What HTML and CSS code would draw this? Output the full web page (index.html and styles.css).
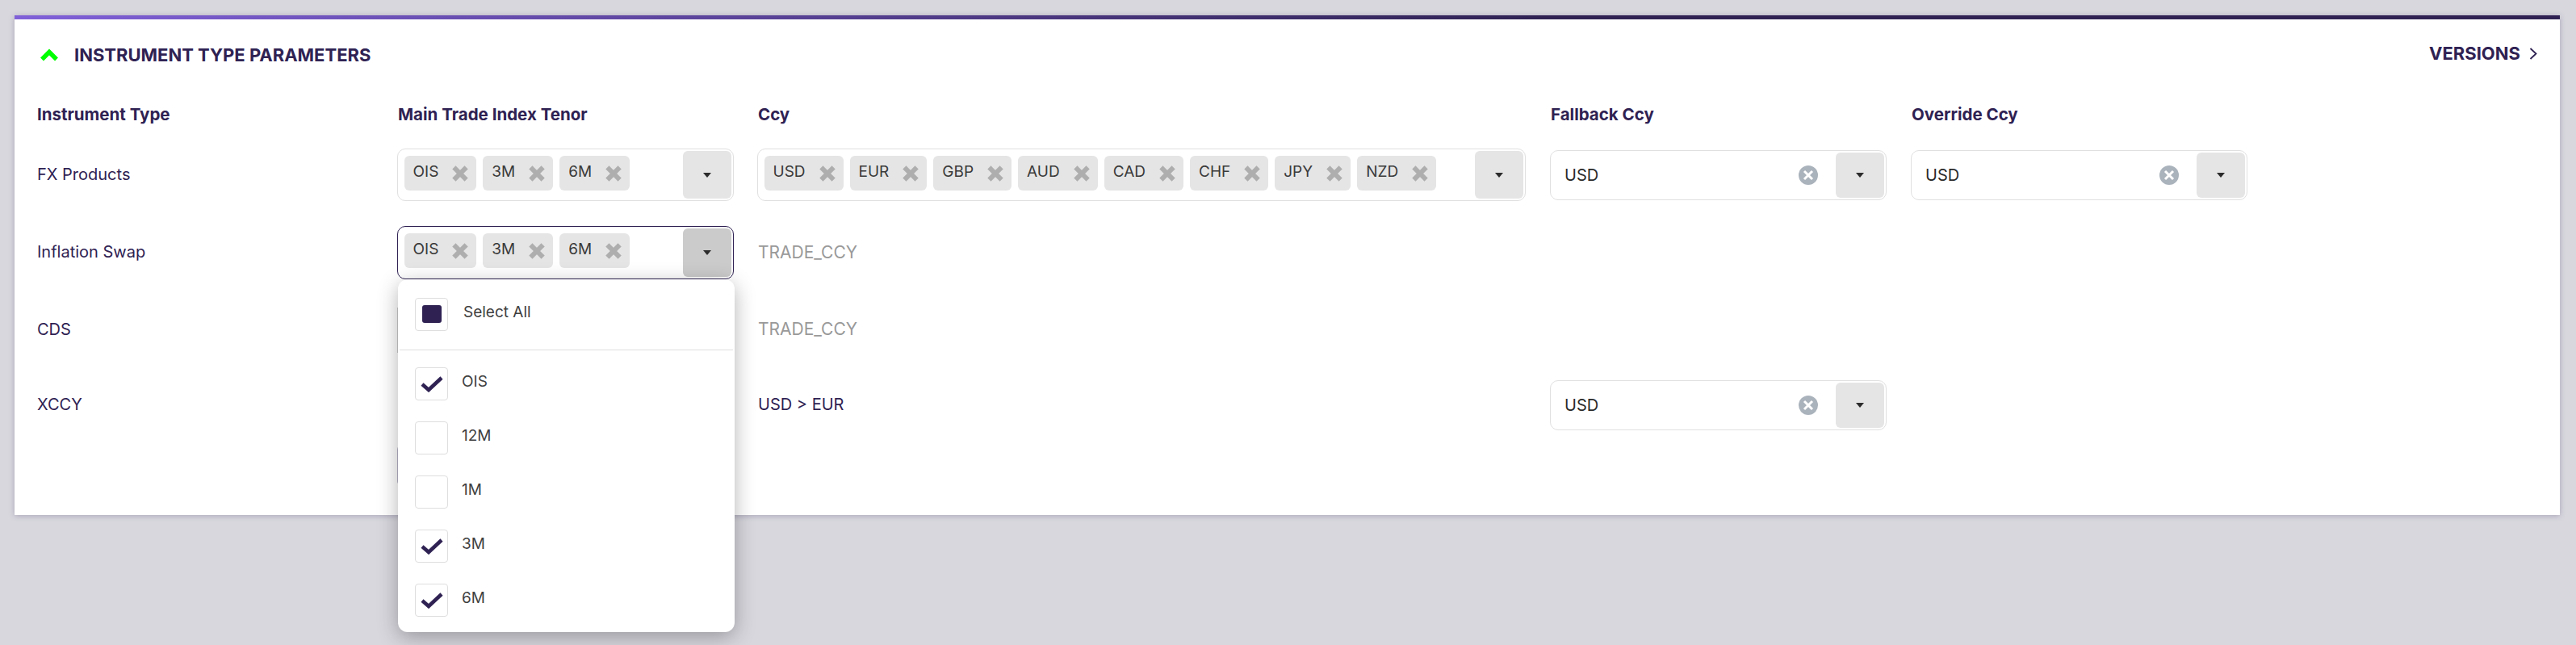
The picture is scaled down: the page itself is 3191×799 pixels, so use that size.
FILE: index.html
```html
<!DOCTYPE html>
<html lang="en">
<head>
    <meta charset="UTF-8">
    <title>Instrument Type Parameters</title>
    <link rel="stylesheet" href="styles.css">
</head>
<body>
    <svg class="icon-defs" width="0" height="0">
        <symbol id="chip-x" viewBox="0 0 20 20"><path d="M4.5 4.5 L15.5 15.5 M15.5 4.5 L4.5 15.5" fill="none" stroke="#aeaeae" stroke-width="6" stroke-linecap="square"/></symbol>
        <symbol id="clear-x" viewBox="0 0 24 24"><circle cx="12" cy="12" r="12" fill="#aab2bb"/><path d="M7 7 L17 17 M17 7 L7 17" fill="none" stroke="#fff" stroke-width="3"/></symbol>
        <symbol id="tick" viewBox="0 0 28 21"><path d="M2 11 L10 18 L26 3" fill="none" stroke="#2f2253" stroke-width="4.6"/></symbol>
    </svg>

    <div class="card">
        <div class="card-header">
            <div class="card-title">
                <svg class="chevron" viewBox="0 0 24 16"><path d="M3 13.5 L12 4.5 L21 13.5" fill="none" stroke="#00ff00" stroke-width="5.5"/></svg>
                <span>INSTRUMENT TYPE PARAMETERS</span>
            </div>
            <div class="versions">
                <span>VERSIONS</span>
                <svg class="versions-arrow" viewBox="0 0 10 15"><path d="M1.5 1 L8.5 7.5 L1.5 14" fill="none" stroke="#2f2253" stroke-width="1.8"/></svg>
            </div>
        </div>

        <div class="param-grid">
            <div class="col-head">Instrument Type</div>
            <div class="col-head">Main Trade Index Tenor</div>
            <div class="col-head">Ccy</div>
            <div class="col-head">Fallback Ccy</div>
            <div class="col-head">Override Ccy</div>

            <!-- FX Products -->
            <div class="row-label">FX Products</div>
            <div class="multi">
                <div class="chips">
                    <span class="chip">OIS<svg class="chip-x"><use href="#chip-x"/></svg></span>
                    <span class="chip">3M<svg class="chip-x"><use href="#chip-x"/></svg></span>
                    <span class="chip">6M<svg class="chip-x"><use href="#chip-x"/></svg></span>
                </div>
                <div class="drop-btn"><i class="caret"></i></div>
            </div>
            <div class="multi multi-wide">
                <div class="chips">
                    <span class="chip">USD<svg class="chip-x"><use href="#chip-x"/></svg></span>
                    <span class="chip">EUR<svg class="chip-x"><use href="#chip-x"/></svg></span>
                    <span class="chip">GBP<svg class="chip-x"><use href="#chip-x"/></svg></span>
                    <span class="chip">AUD<svg class="chip-x"><use href="#chip-x"/></svg></span>
                    <span class="chip">CAD<svg class="chip-x"><use href="#chip-x"/></svg></span>
                    <span class="chip">CHF<svg class="chip-x"><use href="#chip-x"/></svg></span>
                    <span class="chip">JPY<svg class="chip-x"><use href="#chip-x"/></svg></span>
                    <span class="chip">NZD<svg class="chip-x"><use href="#chip-x"/></svg></span>
                </div>
                <div class="drop-btn"><i class="caret"></i></div>
            </div>
            <div class="single">
                <span class="single-value">USD</span>
                <svg class="clear-x"><use href="#clear-x"/></svg>
                <div class="drop-btn"><i class="caret"></i></div>
            </div>
            <div class="single">
                <span class="single-value">USD</span>
                <svg class="clear-x"><use href="#clear-x"/></svg>
                <div class="drop-btn"><i class="caret"></i></div>
            </div>

            <!-- Inflation Swap -->
            <div class="row-label">Inflation Swap</div>
            <div class="multi-wrap">
                <div class="multi is-open">
                    <div class="chips">
                        <span class="chip">OIS<svg class="chip-x"><use href="#chip-x"/></svg></span>
                        <span class="chip">3M<svg class="chip-x"><use href="#chip-x"/></svg></span>
                        <span class="chip">6M<svg class="chip-x"><use href="#chip-x"/></svg></span>
                    </div>
                    <div class="drop-btn"><i class="caret"></i></div>
                </div>
                <div class="menu">
                    <label class="menu-all"><span class="box"><i class="box-fill"></i></span><span>Select All</span></label>
                    <div class="menu-list">
                        <label class="menu-item"><span class="box"><svg class="tick"><use href="#tick"/></svg></span><span>OIS</span></label>
                        <label class="menu-item"><span class="box"></span><span>12M</span></label>
                        <label class="menu-item"><span class="box"></span><span>1M</span></label>
                        <label class="menu-item"><span class="box"><svg class="tick"><use href="#tick"/></svg></span><span>3M</span></label>
                        <label class="menu-item"><span class="box"><svg class="tick"><use href="#tick"/></svg></span><span>6M</span></label>
                    </div>
                </div>
            </div>
            <div class="row-value muted">TRADE_CCY</div>
            <div></div>
            <div></div>

            <!-- CDS -->
            <div class="row-label">CDS</div>
            <div class="covered-btn"></div>
            <div class="row-value muted">TRADE_CCY</div>
            <div></div>
            <div></div>

            <!-- XCCY -->
            <div class="row-label">XCCY</div>
            <div></div>
            <div class="row-value">USD &gt; EUR</div>
            <div class="single">
                <span class="single-value">USD</span>
                <svg class="clear-x"><use href="#clear-x"/></svg>
                <div class="drop-btn"><i class="caret"></i></div>
            </div>
            <div></div>
        </div>

        <div class="card-footer">
            <div class="footer-btn"></div>
        </div>
    </div>
</body>
</html>
```

FILE: styles.css
```css
* {
    box-sizing: border-box;
}

body {
    margin: 0;
    padding: 19px 20px 0 18px;
    height: 799px;
    overflow: hidden;
    background-color: #d8d7de;
    font-family: "Inter", "Noto Sans", sans-serif;
    font-size: 20px;
    color: #2f2253;
}

.icon-defs {
    position: absolute;
}

.card {
    height: 619px;
    padding: 0 28px;
    background-color: #fff;
    border-top: 5px solid;
    border-image: linear-gradient(90deg, #8060d8, #2f2253 60%) 1;
    box-shadow: 0 1px 7px rgba(47, 34, 83, 0.28);
}

.card-header {
    display: flex;
    justify-content: space-between;
    align-items: center;
    height: 84px;
}

.card-title {
    display: flex;
    align-items: center;
    gap: 19px;
    padding: 4px 0 0 3px;
    font-size: 22px;
    font-weight: 700;
}

.chevron {
    width: 24px;
    height: 16px;
}

.versions {
    display: flex;
    align-items: center;
    gap: 11px;
    font-size: 22px;
    font-weight: 700;
}

.versions-arrow {
    width: 10px;
    height: 15px;
}

.param-grid {
    display: grid;
    grid-template-columns: 446px 446px 982px 447px 417px;
    grid-template-rows: 46px 66px 66px 65px 62px;
    row-gap: 30px;
    align-items: center;
}

.col-head {
    align-self: start;
    padding: 21px 0 0 1px;
    font-size: 20.5px;
    font-weight: 700;
}

.param-grid > .col-head:first-child {
    padding-left: 0;
}

.row-label,
.row-value {
    margin-top: -2px;
}

.row-value {
    padding-left: 1px;
}

.muted {
    font-size: 21px;
    color: #999;
}

.multi,
.single {
    display: flex;
    justify-content: space-between;
    width: 417px;
    padding: 2px;
    background-color: #fff;
    border: 1.5px solid #e0e0e0;
    border-radius: 10px;
}

.multi {
    height: 65px;
    align-self: start;
    color: #3a3a3a;
}

.multi-wide {
    width: 952px;
}

.multi-wrap {
    position: relative;
    align-self: start;
}

.is-open {
    height: 66px;
    border-color: #2f2253;
}

.is-open .drop-btn {
    background-color: #cbcbcb;
}

.single {
    height: 62px;
    align-items: stretch;
    color: #2b2b2b;
}

.single-value {
    flex: 1;
    align-self: center;
    padding-left: 15px;
}

.chips {
    display: flex;
    gap: 8px;
    padding: 5.5px 0 0 5.5px;
}

.chip {
    display: flex;
    gap: 17px;
    height: 43px;
    padding: 8px 10px 0 11px;
    font-size: 19px;
    line-height: 24px;
    background-color: #e5e5e5;
    border-radius: 6px;
}

.chip-x {
    width: 20px;
    height: 20px;
    margin-top: 4px;
}

.clear-x {
    width: 24px;
    height: 24px;
    align-self: center;
    margin-right: 22px;
}

.drop-btn {
    display: flex;
    justify-content: center;
    align-items: center;
    width: 60px;
    background-color: #e5e5e5;
    border-radius: 6px;
}

.caret {
    width: 0;
    height: 0;
    border-top: 6px solid #2b2b2b;
    border-left: 5.5px solid transparent;
    border-right: 5.5px solid transparent;
}

.menu {
    position: absolute;
    top: 66px;
    left: 1px;
    z-index: 2;
    width: 417px;
    height: 437px;
    background-color: #fff;
    border-radius: 12px;
    box-shadow: 0 6px 26px rgba(0, 0, 0, 0.3);
    font-size: 19px;
    color: #3f3f3f;
}

.menu-all {
    display: flex;
    align-items: center;
    gap: 19px;
    height: 88px;
    margin: 0 2px;
    padding: 0 0 1px 19px;
    border-bottom: 1.5px solid #dedede;
}

.menu-list {
    display: flex;
    flex-direction: column;
    gap: 26px;
    padding: 21px 0 0 21px;
}

.menu-item {
    display: flex;
    align-items: center;
    gap: 17px;
}

.menu-all span:last-child,
.menu-item span:last-child {
    margin-top: -6px;
}

.box {
    display: flex;
    justify-content: center;
    align-items: center;
    width: 41px;
    height: 41px;
    border: 1.5px solid #dedede;
    border-radius: 4px;
}

.box-fill {
    width: 24px;
    height: 22px;
    background-color: #2f2253;
    border-radius: 3px;
}

.tick {
    width: 28px;
    height: 21px;
}

/* these two sit behind the open menu, only a sliver of each shows */
.covered-btn {
    width: 60px;
    height: 56px;
    background-color: #cdcdcd;
}

.card-footer {
    padding-left: 446px;
    margin-top: 18px;
}

.footer-btn {
    width: 60px;
    height: 51px;
    background-color: #b8b5c9;
    border-radius: 6px;
}
```
